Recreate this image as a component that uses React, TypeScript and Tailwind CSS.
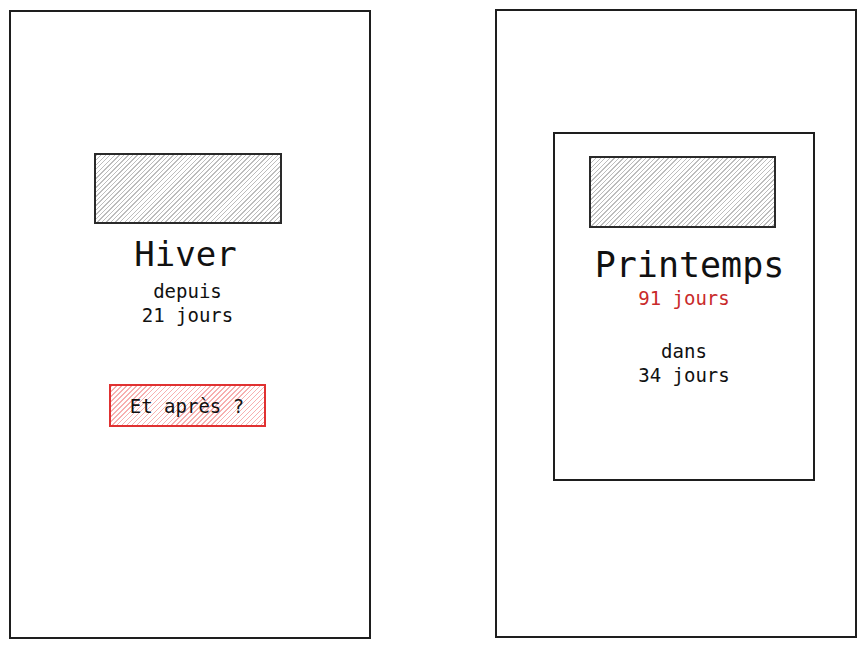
import React from "react";

const mono = "font-['DejaVu_Sans_Mono',monospace]";

export default function App() {
  return (
    <div className={`w-[866px] h-[648px] bg-white relative flex ${mono} text-[#111]`}>
      {/* Left frame */}
      <div className="ml-[9px] mt-[10px] w-[362px] h-[629px] border-2 border-[#1e1e1e] flex flex-col items-center">
        <div className="mt-[141px] -ml-[4px] w-[188px] h-[71px] border-2 border-[#2a2a2a] bg-[repeating-linear-gradient(135deg,#bdbdbd_0_1px,transparent_1px_3.2px)]" />
        <div className="mt-[10px] -ml-[9px] text-[34px] leading-[40px]">Hiver</div>
        <div className="mt-[5px] -ml-[5px] text-[19px] leading-[24px] text-center">
          <div>depuis</div>
          <div>21 jours</div>
        </div>
        <div className="mt-[57px] -ml-[6px] w-[157px] h-[43px] border-2 border-[#e03131] bg-[repeating-linear-gradient(135deg,#f7b0b0_0_1px,transparent_1px_3.5px)] flex items-center justify-center text-[19px] leading-[24px]">
          <span>Et après ?</span>
        </div>
      </div>

      {/* Right frame */}
      <div className="ml-[124px] mt-[9px] w-[362px] h-[629px] border-2 border-[#1e1e1e] flex flex-col">
        <div className="ml-[56px] mt-[121px] w-[262px] h-[349px] border-2 border-[#1e1e1e] flex flex-col items-center">
          <div className="mt-[22px] -ml-[4px] w-[187px] h-[72px] border-2 border-[#2a2a2a] bg-[repeating-linear-gradient(135deg,#bdbdbd_0_1px,transparent_1px_3.2px)]" />
          <div className="mt-[17px] ml-[11px] text-[35px] leading-[40px]">Printemps</div>
          <div className="mt-[1px] text-[19px] leading-[24px] text-[#c92a2a]">91 jours</div>
          <div className="mt-[29px] text-[19px] leading-[24px] text-center">
            <div>dans</div>
            <div>34 jours</div>
          </div>
        </div>
      </div>
    </div>
  );
}
